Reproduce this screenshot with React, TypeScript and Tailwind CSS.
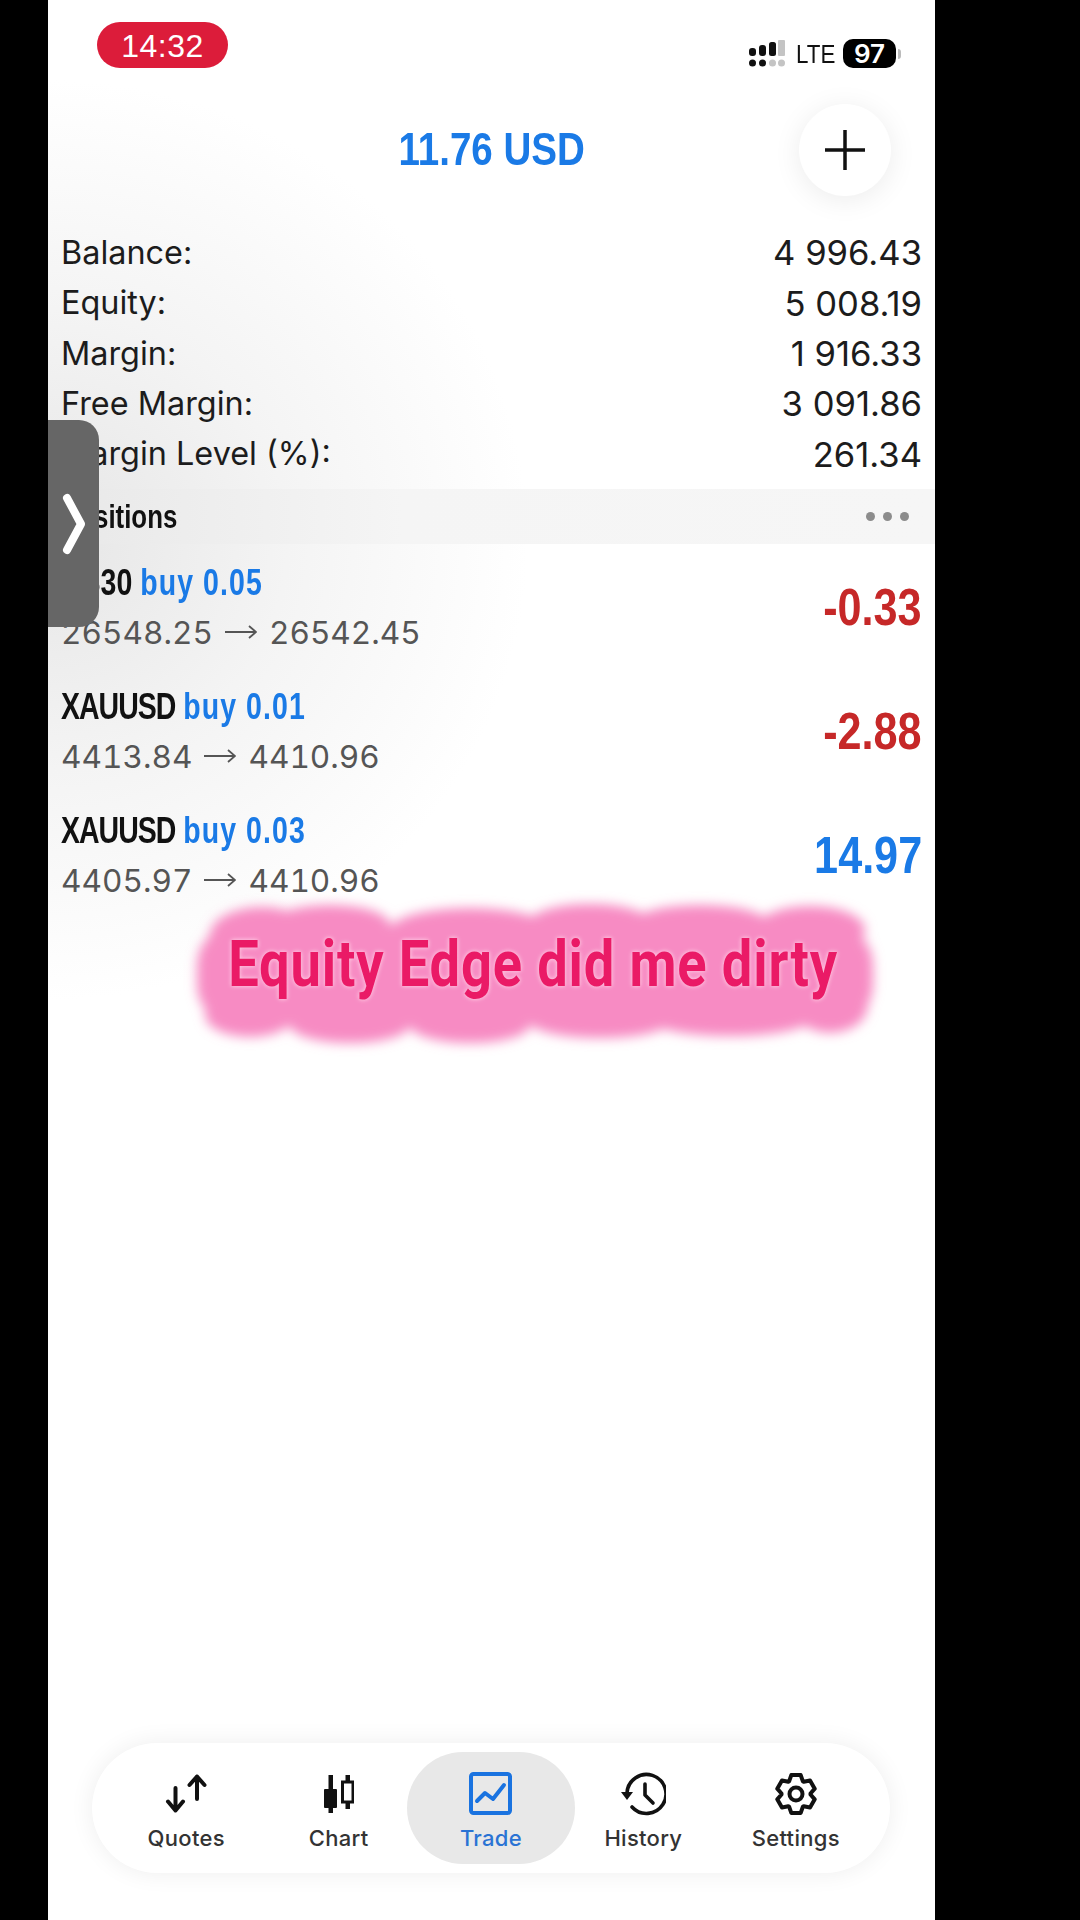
const BOLD = "font-['Liberation_Sans',sans-serif] font-bold";

const summary = [
    ['Balance:', '4 996.43'],
    ['Equity:', '5 008.19'],
    ['Margin:', '1 916.33'],
    ['Free Margin:', '3 091.86'],
    ['Margin Level (%):', '261.34'],
];

const positions = [
    { symbol: 'US30', lot: 'buy 0.05', from: '26548.25', to: '26542.45', profit: '-0.33', up: false },
    { symbol: 'XAUUSD', lot: 'buy 0.01', from: '4413.84', to: '4410.96', profit: '-2.88', up: false },
    { symbol: 'XAUUSD', lot: 'buy 0.03', from: '4405.97', to: '4410.96', profit: '14.97', up: true },
];

function gearPath() {
    const pts: string[] = [];
    for (let i = 0; i < 6; i++) {
        const a = -90 + i * 60;
        for (const [d, r] of [[-28, 14.5], [-14, 19.5], [14, 19.5], [28, 14.5]]) {
            const t = ((a + d) * Math.PI) / 180;
            pts.push(`${(21 + r * Math.cos(t)).toFixed(2)} ${(21 + r * Math.sin(t)).toFixed(2)}`);
        }
    }
    return `M${pts.join('L')}Z`;
}

function SignalIcon() {
    return (
        <svg width="36" height="28" viewBox="0 0 36 28" className="shrink-0">
            <rect x="0" y="8" width="7" height="8" rx="3" fill="#111" />
            <rect x="10" y="5" width="7" height="11" rx="3" fill="#111" />
            <rect x="20" y="2" width="7" height="14" rx="2.5" fill="#111" />
            <rect x="29" y="0" width="7" height="16" rx="1" fill="#c4c4c4" />
            <circle cx="3.5" cy="23" r="3.5" fill="#111" />
            <circle cx="13.5" cy="23" r="3.5" fill="#111" />
            <circle cx="23.5" cy="23" r="3.5" fill="#c4c4c4" />
            <circle cx="32.5" cy="23" r="3.5" fill="#c4c4c4" />
        </svg>
    );
}

function QuotesIcon() {
    return (
        <svg width="43" height="39" viewBox="0 0 43 39" fill="none" stroke="#111" strokeWidth="4" strokeLinecap="round" strokeLinejoin="round">
            <path d="M10.5 14V36M3 27.5L10.5 36.5L18 27.5" />
            <path d="M32 2.5V25M24.5 11L32 2.5L39.5 11" />
        </svg>
    );
}

function ChartIcon() {
    return (
        <svg width="30" height="38" viewBox="0 0 30 38" fill="none">
            <rect x="4.5" y="0" width="4.5" height="38" fill="#111" />
            <rect x="0" y="14" width="13" height="19" rx="1" fill="#111" />
            <rect x="21.5" y="0" width="4.5" height="34" fill="#111" />
            <rect x="18.5" y="7" width="10.5" height="20" fill="#fff" stroke="#111" strokeWidth="3" />
        </svg>
    );
}

function TradeIcon() {
    return (
        <svg width="43" height="43" viewBox="0 0 43 43" fill="none" stroke="#1a73e0" strokeWidth="4" strokeLinejoin="round" strokeLinecap="round">
            <rect x="2" y="2" width="39" height="39" rx="2.5" />
            <path d="M8 29L16 21L24 27L35 13" />
        </svg>
    );
}

function HistoryIcon() {
    return (
        <svg width="46" height="44" viewBox="0 0 46 44" fill="none" stroke="#111" strokeWidth="3.6" strokeLinecap="round" strokeLinejoin="round">
            <path d="M7 21A19.5 19.5 0 1 1 12 35" />
            <path d="M1 20H13L7 28Z" fill="#111" stroke="none" />
            <path d="M25 12V23L33 31" />
        </svg>
    );
}

function GearIcon() {
    return (
        <svg width="42" height="42" viewBox="0 0 42 42" fill="none" stroke="#111" strokeWidth="4" strokeLinejoin="round">
            <path d={gearPath()} />
            <circle cx="21" cy="21" r="6.5" />
        </svg>
    );
}

function NavItem({ label, icon, active }: { label: string; icon: React.ReactNode; active?: boolean }) {
    return (
        <div className={`flex h-[112px] flex-col items-center justify-center gap-[10px] rounded-[56px] pt-[5px] ${active ? 'mx-[-8px] w-[169px] bg-[#e8e8e8] text-[#2a73d4]' : 'w-[153px] text-[#333]'}`}>
            <div className="flex h-[44px] items-center justify-center">{icon}</div>
            <span className="text-[22px] leading-[24px] font-medium tracking-[0.3px]">{label}</span>
        </div>
    );
}

function Arrow() {
    return (
        <svg width="32" height="14" viewBox="0 0 32 14" fill="none" stroke="#555" strokeWidth="1.8" className="mx-[12px] inline-block">
            <path d="M0 7H31M24 1L31 7L24 13" />
        </svg>
    );
}

function Caption() {
    const lumps = [
        [262, 935, 52, 28], [330, 925, 60, 20], [470, 930, 80, 22], [590, 922, 60, 18], [700, 925, 70, 20], [810, 930, 55, 24],
        [250, 1015, 45, 22], [350, 1025, 60, 18], [470, 1025, 60, 18], [600, 1022, 70, 16], [730, 1020, 80, 16], [830, 1005, 38, 28],
    ];
    return (
        <div className="absolute top-[890px] left-[180px] h-[170px] w-[720px]">
            <svg width="720" height="170" viewBox="180 890 720 170" className="absolute inset-0">
                <defs>
                    <filter id="soft"><feGaussianBlur stdDeviation="6" /></filter>
                </defs>
                <g fill="#f78bc3" filter="url(#soft)">
                    <rect x="197" y="925" width="676" height="100" rx="40" />
                    {lumps.map(([cx, cy, rx, ry], i) => (
                        <ellipse key={i} cx={cx} cy={cy} rx={rx} ry={ry} />
                    ))}
                </g>
            </svg>
            <div className="absolute inset-0 flex items-center justify-center pr-[14px] pb-[20px]">
                <span className="scale-x-[0.835] font-['Roboto',sans-serif] text-[65px] font-bold tracking-[1px] whitespace-nowrap text-[#ea1a66] [text-shadow:0_0_4px_#fcc0dd,0_0_6px_#fcc0dd]">Equity Edge did me dirty</span>
            </div>
        </div>
    );
}

export default function App() {
    return (
        <div className="relative flex h-[1920px] w-[1080px] overflow-hidden bg-black font-['Inter',sans-serif]">
            <div className="ml-[48px] flex h-full w-[887px] flex-col bg-white bg-[radial-gradient(ellipse_480px_460px_at_0px_540px,#e6e6e6_0%,#f4f4f4_50%,#ffffff_100%)]">
                <div className="flex h-[90px] items-start justify-between pr-[34px] pl-[49px]">
                    <div className="mt-[22px] flex h-[46px] w-[131px] items-center justify-center rounded-[23px] bg-[#dc1c3a] pt-[1px] font-['Liberation_Sans',sans-serif] text-[32px] tracking-[0.5px] text-white">14:32</div>
                    <div className="mt-[39px] flex items-center">
                        <SignalIcon />
                        <span className="ml-[11px] w-[40px] origin-left scale-x-[0.86] font-['Liberation_Sans',sans-serif] text-[26px] leading-[28px] text-[#111]">LTE</span>
                        <span className="ml-[7px] flex h-[29px] w-[53px] items-center justify-center rounded-[10px] bg-black text-[26px] font-semibold text-white">97</span>
                        <span className="ml-[2px] h-[10px] w-[3px] rounded-r-full bg-[#bbb]" />
                    </div>
                </div>
                <div className="relative flex h-[120px] items-center justify-center">
                    <span className={`pb-[2px] scale-x-[0.82] text-[47px] text-[#1a7ae6] ${BOLD}`}>11.76 USD</span>
                    <div className="absolute top-[14px] right-[44px] flex h-[92px] w-[92px] items-center justify-center rounded-full bg-white shadow-[0_4px_28px_rgba(0,0,0,0.08)]">
                        <svg width="42" height="42" viewBox="0 0 42 42" stroke="#111" strokeWidth="3.5"><path d="M21 1V41M1 21H41" /></svg>
                    </div>
                </div>
                <div className="mt-[18px] flex flex-col px-[13px]">
                    {summary.map(([label, value]) => (
                        <div key={label} className="flex h-[50.4px] items-center justify-between text-[#1c1c1c]">
                            <span className="text-[32.4px]">{label}</span>
                            <span className="text-[34.6px]">{value}</span>
                        </div>
                    ))}
                </div>
                <div className="mt-[9px] flex h-[55px] items-center justify-between bg-[linear-gradient(90deg,#e8e8e8,#f5f5f5_40%,#f6f6f6)] pr-[26px] pl-[13px]">
                    <span className={`origin-left scale-x-[0.76] text-[34px] text-[#111] ${BOLD}`}>Positions</span>
                    <div className="flex gap-[8px]">
                        <span className="h-[9px] w-[9px] rounded-full bg-[#8c8c8c]" />
                        <span className="h-[9px] w-[9px] rounded-full bg-[#8c8c8c]" />
                        <span className="h-[9px] w-[9px] rounded-full bg-[#8c8c8c]" />
                    </div>
                </div>
                <div className="mt-[1px] flex flex-col px-[13px]">
                    {positions.map((p, i) => (
                        <div key={i} className="flex h-[124px] items-center justify-between">
                            <div className="flex flex-col">
                                <div className={`h-[49px] origin-left scale-x-[0.77] text-[37px] leading-[49px] whitespace-nowrap ${BOLD}`}>
                                    <span className={`text-[#111] ${p.symbol === 'XAUUSD' ? 'tracking-[-1.3px]' : ''}`}>{p.symbol}</span>{' '}
                                    <span className="tracking-[1.4px] text-[#1a7ae6]">{p.lot}</span>
                                </div>
                                <div className="flex h-[49px] items-center pt-[2px] text-[31.6px] leading-[49px] text-[#555] tabular-nums">
                                    <span>{p.from}</span>
                                    <Arrow />
                                    <span>{p.to}</span>
                                </div>
                            </div>
                            <span className={`origin-right scale-x-[0.83] text-[52px] ${BOLD} ${p.up ? 'text-[#1a7ae6]' : 'text-[#c62828]'}`}>{p.profit}</span>
                        </div>
                    ))}
                </div>
                <div className="mt-auto mb-[47px] ml-[44px] flex h-[130px] w-[798px] items-center justify-between rounded-[65px] bg-white px-[18px] shadow-[0_0_24px_rgba(0,0,0,0.07)]">
                    <NavItem label="Quotes" icon={<QuotesIcon />} />
                    <NavItem label="Chart" icon={<ChartIcon />} />
                    <NavItem label="Trade" icon={<TradeIcon />} active />
                    <NavItem label="History" icon={<HistoryIcon />} />
                    <NavItem label="Settings" icon={<GearIcon />} />
                </div>
            </div>

            {/* side handle sits on top of the list */}
            <div className="absolute top-[420px] left-[48px] flex h-[207px] w-[51px] items-center justify-center rounded-r-[20px] bg-[#666]">
                <svg width="24" height="62" viewBox="0 0 24 62" fill="none" stroke="#fff" strokeWidth="8" strokeLinecap="round" strokeLinejoin="round"><path d="M5 5L19 31L5 57" /></svg>
            </div>
            <Caption />
        </div>
    );
}
